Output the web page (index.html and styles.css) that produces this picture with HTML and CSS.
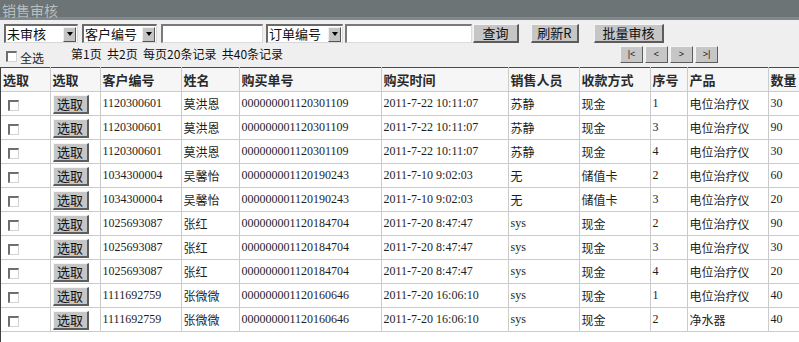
FILE: index.html
```html
<!DOCTYPE html>
<html>
<head>
<meta charset="utf-8">
<link rel="stylesheet" href="styles.css">
</head>
<body>
<div class="page">
  <div class="titlebar"><span class="title">销售审核</span></div>
  <div class="toolbar">
    <div class="row1">
      <div class="sel w1"><span class="sel-text">未审核</span><span class="arrow"><i></i></span></div>
      <div class="sel w2"><span class="sel-text">客户编号</span><span class="arrow"><i></i></span></div>
      <div class="inp w3"></div>
      <div class="sel w4"><span class="sel-text">订单编号</span><span class="arrow"><i></i></span></div>
      <div class="inp w5"></div>
      <div class="btn b1">查询</div>
      <div class="btn b2">刷新R</div>
      <div class="btn b3">批量审核</div>
    </div>
    <div class="row2">
      <span class="cb cb-all"></span><span class="all-label">全选</span>
      <span class="pageinfo">第1页&nbsp;&nbsp;共2页&nbsp;&nbsp;每页20条记录&nbsp;&nbsp;共40条记录</span>
      <div class="pager">
        <span class="pbtn">|&lt;</span><span class="pbtn">&lt;</span><span class="pbtn">&gt;</span><span class="pbtn">&gt;|</span>
      </div>
    </div>
  </div>
  <div class="grid-wrap">
    <table class="grid">
      <colgroup>
        <col class="c1"><col class="c2"><col class="c3"><col class="c4"><col class="c5"><col class="c6"><col class="c7"><col class="c8"><col class="c9"><col class="c10"><col class="c11">
      </colgroup>
      <thead>
        <tr><th>选取</th><th>选取</th><th>客户编号</th><th>姓名</th><th>购买单号</th><th>购买时间</th><th>销售人员</th><th>收款方式</th><th>序号</th><th>产品</th><th>数量</th></tr>
      </thead>
      <tbody>
        <tr><td><span class="cb"></span></td><td><span class="sbtn">选取</span></td><td class="num">1120300601</td><td>莫洪恩</td><td class="num">000000001120301109</td><td class="num">2011-7-22 10:11:07</td><td>苏静</td><td>现金</td><td class="num">1</td><td>电位治疗仪</td><td class="num">30</td></tr>
        <tr><td><span class="cb"></span></td><td><span class="sbtn">选取</span></td><td class="num">1120300601</td><td>莫洪恩</td><td class="num">000000001120301109</td><td class="num">2011-7-22 10:11:07</td><td>苏静</td><td>现金</td><td class="num">3</td><td>电位治疗仪</td><td class="num">90</td></tr>
        <tr><td><span class="cb"></span></td><td><span class="sbtn">选取</span></td><td class="num">1120300601</td><td>莫洪恩</td><td class="num">000000001120301109</td><td class="num">2011-7-22 10:11:07</td><td>苏静</td><td>现金</td><td class="num">4</td><td>电位治疗仪</td><td class="num">30</td></tr>
        <tr><td><span class="cb"></span></td><td><span class="sbtn">选取</span></td><td class="num">1034300004</td><td>吴馨怡</td><td class="num">000000001120190243</td><td class="num">2011-7-10 9:02:03</td><td>无</td><td>储值卡</td><td class="num">2</td><td>电位治疗仪</td><td class="num">60</td></tr>
        <tr><td><span class="cb"></span></td><td><span class="sbtn">选取</span></td><td class="num">1034300004</td><td>吴馨怡</td><td class="num">000000001120190243</td><td class="num">2011-7-10 9:02:03</td><td>无</td><td>储值卡</td><td class="num">3</td><td>电位治疗仪</td><td class="num">20</td></tr>
        <tr><td><span class="cb"></span></td><td><span class="sbtn">选取</span></td><td class="num">1025693087</td><td>张红</td><td class="num">000000001120184704</td><td class="num">2011-7-20 8:47:47</td><td class="num">sys</td><td>现金</td><td class="num">2</td><td>电位治疗仪</td><td class="num">90</td></tr>
        <tr><td><span class="cb"></span></td><td><span class="sbtn">选取</span></td><td class="num">1025693087</td><td>张红</td><td class="num">000000001120184704</td><td class="num">2011-7-20 8:47:47</td><td class="num">sys</td><td>现金</td><td class="num">3</td><td>电位治疗仪</td><td class="num">30</td></tr>
        <tr><td><span class="cb"></span></td><td><span class="sbtn">选取</span></td><td class="num">1025693087</td><td>张红</td><td class="num">000000001120184704</td><td class="num">2011-7-20 8:47:47</td><td class="num">sys</td><td>现金</td><td class="num">4</td><td>电位治疗仪</td><td class="num">20</td></tr>
        <tr><td><span class="cb"></span></td><td><span class="sbtn">选取</span></td><td class="num">1111692759</td><td>张微微</td><td class="num">000000001120160646</td><td class="num">2011-7-20 16:06:10</td><td class="num">sys</td><td>现金</td><td class="num">1</td><td>电位治疗仪</td><td class="num">40</td></tr>
        <tr><td><span class="cb"></span></td><td><span class="sbtn">选取</span></td><td class="num">1111692759</td><td>张微微</td><td class="num">000000001120160646</td><td class="num">2011-7-20 16:06:10</td><td class="num">sys</td><td>现金</td><td class="num">2</td><td>净水器</td><td class="num">40</td></tr>
      </tbody>
    </table>
  </div>
</div>
</body>
</html>
```

FILE: styles.css
```css
html, body {
  margin: 0;
  padding: 0;
  background: #ffffff;
  overflow: hidden;
}
body {
  font-family: "Noto Sans CJK SC", "Liberation Sans", sans-serif;
  font-size: 12px;
  color: #1e1e1e;
}
.page {
  width: 799px;
  height: 342px;
  overflow: hidden;
}
.titlebar {
  box-sizing: border-box;
  height: 20px;
  padding: 1px 0 0 2px;
  background: #6c7476;
  box-shadow: inset 0 -3px 0 #7f888b;
}
.title {
  display: block;
  color: #b9bebf;
  font-size: 14px;
  line-height: 18px;
}
.toolbar {
  background: #efefef;
  height: 47px;
}
.row1 {
  display: flex;
  align-items: flex-start;
  padding-top: 4px;
  padding-left: 4px;
  height: 19px;
}
.sel {
  box-sizing: border-box;
  height: 19px;
  background: #fff;
  border-top: 2px solid #6a6a6a;
  border-left: 2px solid #6a6a6a;
  border-right: 1px solid #d8d8d8;
  border-bottom: 1px solid #d8d8d8;
  display: flex;
  align-items: center;
  justify-content: space-between;
  font-size: 13px;
  line-height: 16px;
  color: #111;
}
.sel-text { padding-left: 1px; }
.arrow {
  width: 13px;
  height: 15px;
  margin-right: 1px;
  background: #c4c4c4;
  border-top: 1px solid #f0f0f0;
  border-left: 1px solid #f0f0f0;
  border-right: 1px solid #555;
  border-bottom: 1px solid #555;
  box-sizing: border-box;
  display: flex;
  align-items: center;
  justify-content: center;
}
.arrow i {
  width: 0;
  height: 0;
  border-left: 3px solid transparent;
  border-right: 3px solid transparent;
  border-top: 4px solid #000;
}
.w1 { width: 74px; margin-right: 4px; }
.w2 { width: 75px; margin-right: 4px; }
.w4 { width: 77px; margin-right: 2px; }
.inp {
  box-sizing: border-box;
  height: 19px;
  background: #fff;
  border-top: 2px solid #7a7a7a;
  border-left: 2px solid #7a7a7a;
  border-right: 1px solid #dcdcdc;
  border-bottom: 1px solid #dcdcdc;
}
.w3 { width: 102px; margin-right: 3px; }
.w5 { width: 127px; margin-right: 1px; }
.btn {
  box-sizing: border-box;
  height: 19px;
  background: #c6c6c6;
  border-top: 1px solid #f4f4f4;
  border-left: 1px solid #f4f4f4;
  border-right: 2px solid #5c5c5c;
  border-bottom: 2px solid #5c5c5c;
  font-size: 13px;
  line-height: 16px;
  text-align: center;
  color: #111;
}
.b1 { width: 46px; margin-right: 12px; }
.b2 { width: 48px; margin-right: 15px; }
.b3 { width: 70px; }
.row2 {
  display: flex;
  align-items: flex-start;
  height: 24px;
}
.cb {
  display: inline-block;
  box-sizing: border-box;
  width: 11px;
  height: 11px;
  background: #fff;
  border-top: 2px solid #6e6e6e;
  border-left: 2px solid #6e6e6e;
  border-right: 1px solid #d4d4d4;
  border-bottom: 1px solid #d4d4d4;
}
.cb-all {
  margin-left: 6px;
  margin-top: 8px;
}
.all-label {
  margin-left: 3px;
  margin-top: 7px;
  font-size: 12px;
  line-height: 15px;
}
.pageinfo {
  margin-left: 27px;
  margin-top: 3px;
  font-size: 12px;
  line-height: 15px;
  color: #111;
}
.pager {
  display: flex;
  gap: 2px;
  margin-left: auto;
  margin-right: 81px;
  margin-top: 3px;
}
.pbtn {
  box-sizing: border-box;
  width: 23px;
  height: 17px;
  background: #c6c6c6;
  border-top: 1px solid #f4f4f4;
  border-left: 1px solid #f4f4f4;
  border-right: 1px solid #5c5c5c;
  border-bottom: 1px solid #5c5c5c;
  font-family: "Liberation Sans", sans-serif;
  font-size: 9px;
  line-height: 15px;
  text-align: center;
  color: #222;
}
.grid-wrap {
  border-left: 1px solid #404040;
  height: 275px;
  overflow: hidden;
}
.grid {
  border-collapse: collapse;
  table-layout: fixed;
  width: 820px;
  border-top: 1px solid #4a4a4a;
}
.c1 { width: 49px; }
.c2 { width: 50px; }
.c3 { width: 81px; }
.c4 { width: 58px; }
.c5 { width: 142px; }
.c6 { width: 127px; }
.c7 { width: 71px; }
.c8 { width: 71px; }
.c9 { width: 37px; }
.c10 { width: 81px; }
.c11 { width: 53px; }
.grid th, .grid td {
  border: 1px solid #cbcbcb;
  height: 24px;
  padding: 0 0 0 2px;
  text-align: left;
  white-space: nowrap;
  overflow: hidden;
  box-sizing: border-box;
}
.grid tr > :first-child { border-left: none; }
.grid th {
  background: #f6f6f6;
  font-size: 13px;
  font-weight: bold;
  color: #2a2a2a;
  border-top: none;
  height: 24px;
}
.grid td {
  background: #fff;
  font-size: 12px;
  color: #1e1e1e;
}
.grid td.num {
  font-family: "Liberation Serif", "Noto Sans CJK SC", serif;
  font-size: 12px;
}
.grid td .cb {
  margin-left: 5px;
  vertical-align: middle;
}
.sbtn {
  display: inline-block;
  box-sizing: border-box;
  width: 36px;
  height: 19px;
  background: #c6c6c6;
  border-top: 1px solid #f4f4f4;
  border-left: 1px solid #f4f4f4;
  border-right: 2px solid #5c5c5c;
  border-bottom: 2px solid #5c5c5c;
  font-size: 13px;
  line-height: 16px;
  text-align: center;
  vertical-align: middle;
  color: #111;
}
```
